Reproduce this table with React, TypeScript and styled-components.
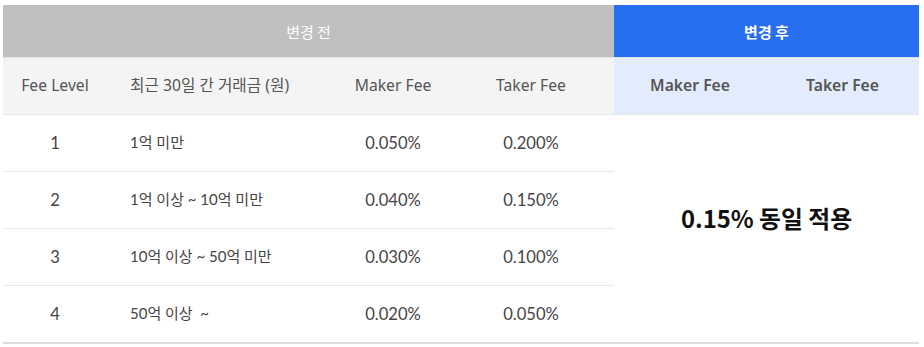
import React from "react";
import styled, { createGlobalStyle } from "styled-components";

const Global = createGlobalStyle`
  html, body { margin: 0; padding: 0; background: #ffffff; }
  body { font-family: Lato, "Noto Sans CJK KR", sans-serif; }
`;

const Wrap = styled.div`
  padding: 5px 5px 0 3px;
`;

const Table = styled.table`
  width: 916px;
  border-collapse: collapse;
  table-layout: fixed;
  font-family: Lato, "Noto Sans CJK KR", sans-serif;
`;

const GroupHead = styled.th<{ $after?: boolean }>`
  height: 52px;
  padding: 0;
  background: ${(p) => (p.$after ? "#286ef0" : "#c0c0c0")};
  color: #ffffff;
  font-family: "Noto Sans CJK KR", sans-serif;
  font-size: 15px;
  font-weight: ${(p) => (p.$after ? 700 : 400)};
  text-align: center;
  vertical-align: middle;
`;

const ColHead = styled.th<{ $after?: boolean; $left?: boolean; $padRight?: number }>`
  height: 53px;
  padding: 0 ${(p) => p.$padRight ?? 0}px 3px ${(p) => (p.$left ? 23 : 0)}px;
  background: ${(p) => (p.$after ? "#e3ecfd" : "#f4f4f4")};
  border-top: 1px solid #e4e4e4;
  border-bottom: 1px solid #e6e6e6;
  color: #555555;
  font-family: "Noto Sans", "Noto Sans CJK KR", sans-serif;
  font-size: ${(p) => (p.$left ? 15.7 : 15.7)}px;
  font-weight: ${(p) => (p.$after ? 600 : 400)};
  text-align: ${(p) => (p.$left ? "left" : "center")};
  vertical-align: middle;
  white-space: nowrap;
`;

const Cell = styled.td<{ $left?: boolean; $last?: boolean; $padRight?: number }>`
  height: ${(p) => (p.$left ? 53 : 56)}px;
  padding: 0 ${(p) => p.$padRight ?? 0}px ${(p) => (p.$left ? 3 : 0)}px ${(p) => (p.$left ? 23 : 0)}px;
  border-bottom: ${(p) => (p.$last ? "2px solid #dddddd" : "1px solid #e8e8e8")};
  color: #444444;
  font-size: ${(p) => (p.$left ? 15 : 16.6)}px;
  text-align: ${(p) => (p.$left ? "left" : "center")};
  vertical-align: middle;
  white-space: pre;
`;

const Merged = styled.td`
  padding: 0 0 22px 0;
  border-bottom: 2px solid #dddddd;
  color: #111111;
  font-family: "Noto Sans CJK KR", sans-serif;
  font-size: 23.8px;
  font-weight: 700;
  text-align: center;
  vertical-align: middle;
`;

const rows = [
  { level: "1", range: "1억 미만", maker: "0.050%", taker: "0.200%" },
  { level: "2", range: "1억 이상 ~ 10억 미만", maker: "0.040%", taker: "0.150%" },
  { level: "3", range: "10억 이상 ~ 50억 미만", maker: "0.030%", taker: "0.100%" },
  { level: "4", range: "50억 이상  ~", maker: "0.020%", taker: "0.050%" },
];

export default function App() {
  return (
    <Wrap>
      <Global />
      <Table>
        <colgroup>
          <col style={{ width: 104 }} />
          <col style={{ width: 216 }} />
          <col style={{ width: 140 }} />
          <col style={{ width: 151 }} />
          <col style={{ width: 152 }} />
          <col style={{ width: 153 }} />
        </colgroup>
        <thead>
          <tr>
            <GroupHead colSpan={4}>변경 전</GroupHead>
            <GroupHead colSpan={2} $after>
              변경 후
            </GroupHead>
          </tr>
          <tr>
            <ColHead>Fee Level</ColHead>
            <ColHead $left>최근 30일 간 거래금 (원)</ColHead>
            <ColHead>Maker Fee</ColHead>
            <ColHead $padRight={15}>Taker Fee</ColHead>
            <ColHead $after>Maker Fee</ColHead>
            <ColHead $after>Taker Fee</ColHead>
          </tr>
        </thead>
        <tbody>
          {rows.map((r, i) => {
            const last = i === rows.length - 1;
            return (
              <tr key={r.level}>
                <Cell $last={last}>{r.level}</Cell>
                <Cell $left $last={last}>
                  {r.range}
                </Cell>
                <Cell $last={last}>{r.maker}</Cell>
                <Cell $last={last} $padRight={15}>
                  {r.taker}
                </Cell>
                {i === 0 && (
                  <Merged colSpan={2} rowSpan={4}>
                    0.15% 동일 적용
                  </Merged>
                )}
              </tr>
            );
          })}
        </tbody>
      </Table>
    </Wrap>
  );
}
